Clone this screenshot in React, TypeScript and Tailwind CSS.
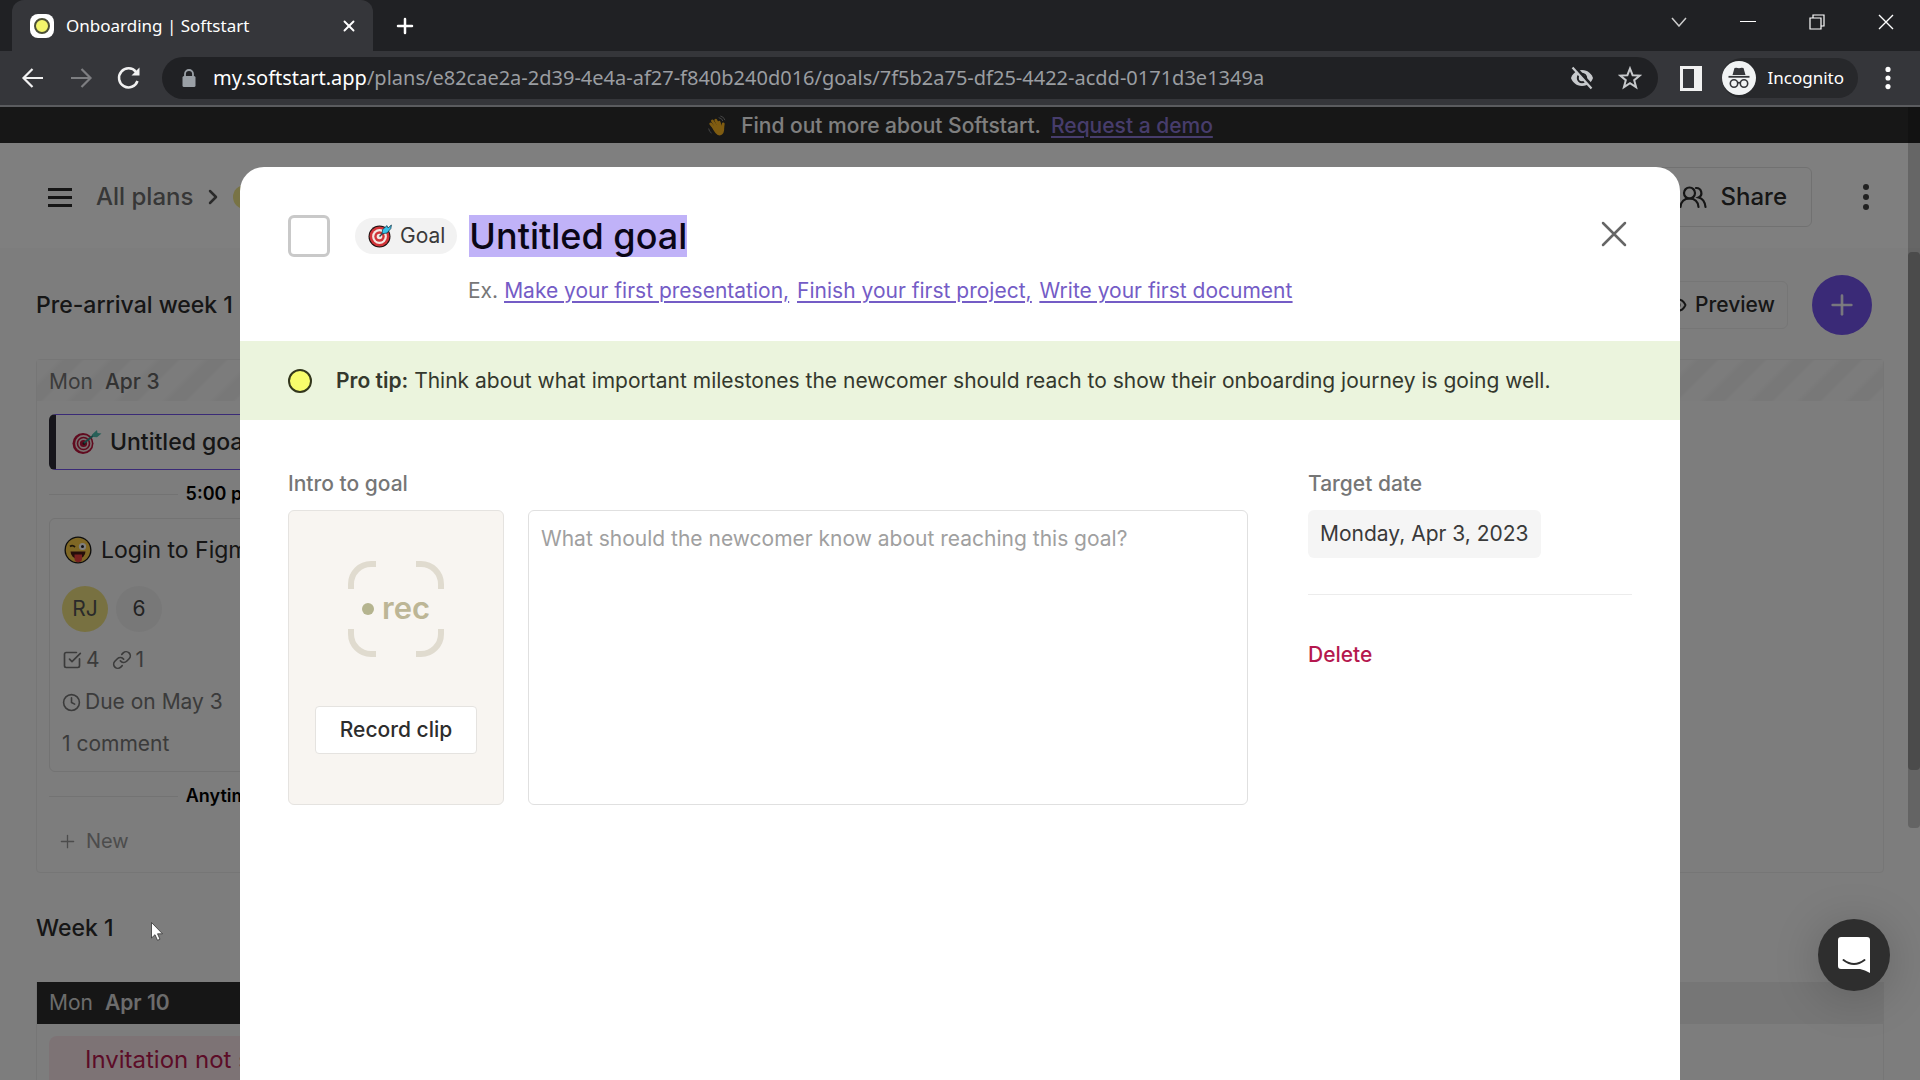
import React from "react";
import { ChevronRight, Clock, Eye, Link, Plus, SquareCheckBig, X } from "lucide-react";

const ui = "font-['Inter',sans-serif]";
const chrome = "font-['Noto_Sans','Open_Sans',sans-serif]";

function TargetEmoji({ className }: { className: string }) {
  return (
    <svg viewBox="0 0 24 24" className={className} aria-hidden="true">
      <circle cx="11.5" cy="12.5" r="11" fill="#1c1212" />
      <circle cx="11.5" cy="12.5" r="10" fill="#d13438" />
      <circle cx="11.5" cy="12.5" r="7.4" fill="#f3e9e3" />
      <circle cx="11.5" cy="12.5" r="5.2" fill="#d13438" />
      <circle cx="11.5" cy="12.5" r="2.8" fill="#f3e9e3" />
      <path d="M11.5 12.5 L18 6" stroke="#32424a" strokeWidth="1.4" />
      <path d="M14 9.8 L14.6 5.6 L19 1.6 L20 4 L23.4 1 L22.8 4.6 L19 9 Z" fill="#37c2ea" stroke="#173f52" strokeWidth="0.8" />
    </svg>
  );
}

function DartEmoji({ className }: { className: string }) {
  return (
    <svg viewBox="0 0 30 26" className={className} aria-hidden="true">
      <circle cx="11" cy="14.5" r="10.5" fill="#c0143c" />
      <circle cx="11.5" cy="14.5" r="7.6" fill="none" stroke="#f2dede" strokeWidth="1.6" />
      <circle cx="11.5" cy="14.5" r="4.4" fill="none" stroke="#f2dede" strokeWidth="1.6" />
      <circle cx="12" cy="14.5" r="1.4" fill="#2b2b2b" />
      <path d="M12 14 L22 6" stroke="#2f8f86" strokeWidth="2" />
      <path d="M20 5.5 L25 1 L25.500 4 L29.500 4.500 L25 8.200 L21.500 8 Z" fill="#4fc0b0" />
    </svg>
  );
}

function WinkEmoji({ className }: { className: string }) {
  return (
    <svg viewBox="0 0 28 28" className={className} aria-hidden="true">
      <circle cx="14" cy="14" r="13.500" fill="#1a1a1a" />
      <circle cx="14" cy="14" r="12.200" fill="#ffcf48" />
      <path d="M6 10.500 Q8.500 8.500 11 11" fill="none" stroke="#3a2a10" strokeWidth="1.800" />
      <circle cx="18.500" cy="10.500" r="3.600" fill="#fff" />
      <circle cx="18.500" cy="10.500" r="1.500" fill="#222" />
      <path d="M6.500 15.500 H21.500 A7.500 7.500 0 0 1 6.500 15.500 Z" fill="#4a1a14" />
      <path d="M10.500 18.500 H18 V22.500 A3.700 3.700 0 0 1 10.500 22.500 Z" fill="#f0433f" />
    </svg>
  );
}

function WaveEmoji({ className }: { className: string }) {
  return (
    <svg viewBox="0 0 24 26" className={className} aria-hidden="true">
      <g stroke="#ffb822" strokeWidth="3.400" strokeLinecap="round" fill="none">
        <path d="M10 17 L4.500 10.500" />
        <path d="M12 15 L6.500 7" />
        <path d="M14.500 14 L10.500 6" />
        <path d="M16.500 14.500 L14.500 8.500" />
        <path d="M18.500 18 L19.500 10.500" />
      </g>
      <path d="M5.500 13 L15 11.500 L20.500 14 Q21.500 23 15.500 24.500 Q10 24.500 5.500 13 Z" fill="#ffb822" />
      <path d="M14 3 Q18 3.500 19 7 M16 1 Q20.500 2 21.500 6 M2 16 Q2.500 20 5.500 21.500" fill="none" stroke="#8a8a8a" strokeWidth="1.200" />
    </svg>
  );
}

function People({ className }: { className: string }) {
  return (
    <svg viewBox="0 0 28 24" className={className} fill="none" stroke="currentColor" strokeWidth="2.200" strokeLinecap="round">
      <circle cx="10.500" cy="8" r="5.500" />
      <path d="M1.500 22 C2 16.500 5.500 13.500 10.500 13.500 S19 16.500 19.500 22" />
      <path d="M17 3 A5 5 0 0 1 19.500 12.500 C23.500 13.500 26 17 26.500 22" />
    </svg>
  );
}

function Incognito({ className }: { className: string }) {
  return (
    <svg viewBox="0 0 34 34" className={className} aria-hidden="true">
      <circle cx="17" cy="17" r="17" fill="#f1f3f4" />
      <path d="M12.500 7 Q14.500 6.500 17 7.200 Q19.500 6.500 21.500 7 L23.500 14 H10.500 Z" fill="#35363a" />
      <path d="M6.500 15.800 H27.500" stroke="#35363a" strokeWidth="1.800" />
      <g fill="none" stroke="#35363a" strokeWidth="1.600">
        <circle cx="12" cy="22.500" r="3.700" />
        <circle cx="22" cy="22.500" r="3.700" />
        <path d="M15.700 22 Q17 21 18.300 22" />
      </g>
    </svg>
  );
}

function Kebab({ className }: { className: string }) {
  return (
    <svg viewBox="0 0 8 28" className={className} fill="currentColor" aria-hidden="true">
      <circle cx="4" cy="4" r="3" />
      <circle cx="4" cy="14" r="3" />
      <circle cx="4" cy="24" r="3" />
    </svg>
  );
}

function BrowserChrome() {
  return (
    <header className={`shrink-0 bg-[#202124] text-white ${chrome}`}>
      <div className="flex h-[51px] items-stretch pl-3">
        <div className="flex w-[361px] items-center rounded-t-xl bg-[#35363a] pr-3 pl-[18px]">
          <span className="flex size-6 items-center justify-center rounded-lg bg-white">
            <span className="size-4 rounded-full border-2 border-[#4c5037] bg-[#f3f56b]" />
          </span>
          <span className="ml-3 flex-1 text-[17px]">Onboarding | Softstart</span>
          <button aria-label="Close tab" className="flex size-6 items-center justify-center">
            <X className="size-[18px]" strokeWidth={2.5} />
          </button>
        </div>
        <button aria-label="New tab" className="flex w-[63px] items-center justify-center">
          <Plus className="size-6" strokeWidth={2.5} />
        </button>
        <div className="ml-auto flex pb-[8px]">
          <button aria-label="Search tabs" className="flex w-[68px] items-center justify-center">
            <svg viewBox="0 0 16 10" className="h-[10px] w-4" fill="none" stroke="#ccc" strokeWidth="1.500"><path d="M1 1 L8 9 L15 1" /></svg>
          </button>
          <button aria-label="Minimize" className="flex w-[69px] items-center justify-center"><span className="h-px w-4 bg-white" /></button>
          <button aria-label="Restore" className="flex w-[69px] items-center justify-center">
            <svg viewBox="0 0 16 16" className="size-4" fill="none" stroke="#fff" strokeWidth="1.200"><path d="M1 4 H12 V15 H1 Z M4 4 V1 H15 V12 H12" /></svg>
          </button>
          <button aria-label="Close" className="flex w-[69px] items-center justify-center">
            <svg viewBox="0 0 16 16" className="size-4" fill="none" stroke="#fff" strokeWidth="1.400"><path d="M1 1 L15 15 M15 1 L1 15" /></svg>
          </button>
        </div>
      </div>
      <div className="flex h-[56px] items-center border-b-2 border-[#5b5c5f] bg-[#35363a] pr-7 pl-[21px]">
        <button aria-label="Back" className="mr-6 size-6">
          <svg viewBox="0 0 24 24" className="size-6" fill="none" stroke="#f1f1f1" strokeWidth="2.200"><path d="M22 12 H3 M11.500 3 L2.500 12 L11.500 21" /></svg>
        </button>
        <button aria-label="Forward" className="mr-6 size-6">
          <svg viewBox="0 0 24 24" className="size-6" fill="none" stroke="#7d7e81" strokeWidth="2.200"><path d="M2 12 H21 M12.500 3 L21.500 12 L12.500 21" /></svg>
        </button>
        <button aria-label="Reload" className="mr-[21px] size-6">
          <svg viewBox="0 0 24 24" className="size-6" fill="none" stroke="#f1f1f1" strokeWidth="2.500"><path d="M20.500 15 A9.500 9.500 0 1 1 19 6" /><path d="M22.500 1.500 V9.500 H14.500 Z" fill="#f1f1f1" stroke="none" /></svg>
        </button>
        <div className="flex h-[42px] min-w-0 flex-1 items-center rounded-full bg-[#202124] pr-[16px] pl-5">
          <svg viewBox="0 0 14 18" className="mr-[17px] h-[18px] w-[14px] shrink-0"><path d="M3 8 V5 A4 4 0 0 1 11 5 V8" fill="none" stroke="#9aa0a6" strokeWidth="1.800" /><rect x="0.500" y="7" width="13" height="11" rx="1.500" fill="#9aa0a6" /></svg>
          <span className="flex-1 truncate text-[20px] text-[#9a9da1]"><span className="text-white">my.softstart.app</span>/plans/e82cae2a-2d39-4e4a-af27-f840b240d016/goals/7f5b2a75-df25-4422-acdd-0171d3e1349a</span>
          <button aria-label="Third-party cookies blocked" className="mr-6 size-6">
            <svg viewBox="0 0 24 24" className="size-6"><path d="M12 4 C6 4 2 8.500 1 12 C2 15.500 6 20 12 20 S22 15.500 23 12 C22 8.500 18 4 12 4 Z" fill="#c7c9cc" /><circle cx="12" cy="12" r="4.200" fill="none" stroke="#202124" strokeWidth="2" /><path d="M4 0 L23 21" stroke="#202124" strokeWidth="3" /><path d="M2.500 1.500 L21.500 22.500" stroke="#c7c9cc" strokeWidth="2.200" /></svg>
          </button>
          <button aria-label="Bookmark" className="size-6">
            <svg viewBox="0 0 24 24" className="size-6" fill="none" stroke="#c7c9cc" strokeWidth="2"><path d="M12 2.500 L14.600 9.200 L21.800 9.600 L16.200 14.200 L18.100 21.200 L12 17.200 L5.900 21.200 L7.800 14.200 L2.200 9.600 L9.400 9.200 Z" /></svg>
          </button>
        </div>
        <button aria-label="Side panel" className="ml-[22px] flex h-[25px] w-[22px] border-[3px] border-r-[8px] border-[#f1f1f1]" />
        <button className="ml-[20px] flex h-[40px] items-center rounded-full bg-[#27282b] pr-[14px] text-[17px]">
          <Incognito className="mr-3 size-[34px]" />
          Incognito
        </button>
        <button aria-label="Menu" className="ml-[26px]"><Kebab className="h-6 w-[8px]" /></button>
      </div>
    </header>
  );
}

function Divider({ label }: { label: string }) {
  return (
    <div className="flex items-center gap-[8px]">
      <span className="h-px flex-1 bg-[#e6e6e6]" />
      <span className="text-[18px] leading-6 font-semibold text-black">{label}</span>
      <span className="h-px flex-1 bg-[#e6e6e6]" />
    </div>
  );
}

function PlanPage() {
  return (
    <div className="h-full overflow-hidden bg-[#fafafa] text-[#2d2d2d]">
      <div className="flex h-9 items-center justify-center gap-[10px] bg-[#2e2e2e] pt-px text-[21px] font-medium text-white">
        <WaveEmoji className="mr-1 h-[22px] w-5" />
        Find out more about Softstart.
        <a href="#demo" className="text-[#8f7ad8] underline decoration-2 underline-offset-3">Request a demo</a>
      </div>
      <div className="flex h-[105px] items-center bg-white pt-[3px] pr-11 pl-12">
        <button aria-label="Open menu" className="flex w-6 flex-col gap-[5px]">
          <span className="h-[3px] bg-[#2d2d2d]" />
          <span className="h-[3px] bg-[#2d2d2d]" />
          <span className="h-[3px] bg-[#2d2d2d]" />
        </button>
        <a href="#plans" className="ml-6 text-[24px] font-medium text-[#6e6e6e]">All plans</a>
        <ChevronRight className="mx-2 size-6 text-[#555]" strokeWidth={2.5} />
        <span className="h-6 w-40 rounded-full bg-[#f0e68a]" />
        <button className="mr-[44px] ml-auto flex h-[60px] items-center gap-[14px] rounded-md border border-[#e3e3e3] pr-6 pl-6 text-[24px] font-medium">
          <People className="h-6 w-7" />
          Share
        </button>
        <button aria-label="Plan options" className="px-[6px] text-[#444]"><Kebab className="h-7 w-[8px]" /></button>
      </div>
      <div className="flex h-[111px] items-center pt-[3px] pr-12 pl-9">
        <h2 className="text-[23px] font-medium">Pre-arrival week 1</h2>
        <button className="ml-auto flex h-12 items-center gap-2 rounded-md border border-[#ececec] px-3 text-[21px] font-medium">
          <Eye className="size-5" strokeWidth={2.5} />
          Preview
        </button>
        <button aria-label="Add" className="ml-6 flex size-[60px] items-center justify-center rounded-full bg-[#7454ee] text-white/90">
          <Plus className="size-8" strokeWidth={2} />
        </button>
      </div>
      <div className="mx-9 rounded-sm border border-[#ececec] pb-[18px]">
        <div className="flex h-[41px] items-center gap-3 bg-[repeating-linear-gradient(135deg,#f9f9f9_0,#f9f9f9_14px,#f0f0f0_20px,#f0f0f0_31px,#f9f9f9_34px)] px-3 pt-[2px] text-[21px] text-[#777]">
          Mon <span className="font-medium text-[#666]">Apr 3</span>
        </div>
        <div className="flex w-[370px] flex-col px-3 pt-[13px]">
          <div className="flex h-14 items-center gap-2 rounded-md border border-l-[7px] border-[#7454ee] border-l-[#2d2b36] bg-white pl-[16px] text-[23px] font-medium">
            <DartEmoji className="h-[26px] w-[30px]" />
            Untitled goal
          </div>
          <div className="py-3"><Divider label="5:00 pm" /></div>
          <div className="flex h-[254px] flex-col rounded-md border border-[#e6e6e6] px-3 pt-[11px] text-[21px] text-[#777]">
            <div className="flex h-10 items-center gap-[9px] pl-[2px] text-[23px] text-[#2d2d2d]">
              <WinkEmoji className="size-7" />
              Login to Figma
            </div>
            <div className="mt-4 flex gap-2">
              <span className="flex size-[46px] items-center justify-center rounded-full bg-[#f0e282] text-[#555]">RJ</span>
              <span className="flex size-[46px] items-center justify-center rounded-full bg-[#f0f0f0] text-[#444]">6</span>
            </div>
            <div className="mt-3 flex h-8 items-center">
              <SquareCheckBig className="mr-1 size-5" />4
              <Link className="mr-1 ml-3 size-5" />1
            </div>
            <div className="mt-[10px] flex h-8 items-center gap-1"><Clock className="size-[19px]" />Due on May 3</div>
            <div className="mt-[10px] flex h-8 items-center">1 comment</div>
          </div>
          <div className="pt-3"><Divider label="Anytime" /></div>
          <button className="mt-5 flex h-[26px] items-center gap-2 pl-2 text-[20px] text-[#999]"><Plus className="size-[21px]" strokeWidth={1.5} />New</button>
        </div>
      </div>
      <h2 className="flex h-[109px] items-center px-9 pt-[2px] text-[23px] font-medium">Week 1</h2>
      <div className="mx-9 border border-t-0 border-[#ececec]">
        <div className="flex h-[42px] bg-[#ececec] text-[21px] text-[#d8d8d8]">
          <div className="flex w-[370px] items-center gap-3 bg-[#2c2c2c] px-3">Mon <span className="font-semibold">Apr 10</span></div>
        </div>
        <div className="w-[370px] px-3 pt-3">
          <div className="flex h-16 items-start rounded-lg bg-[#fbe6eb] pt-[6px] pl-9 text-[24px] text-[#b8194f]">Invitation not sent</div>
        </div>
      </div>
    </div>
  );
}

function GoalDialog() {
  return (
    <div role="dialog" aria-label="Goal" className="flex w-3/4 flex-col rounded-t-3xl bg-white text-[21px] text-[#3a3a3a]">
      <div className="h-[174px] px-12 pt-12">
        <div className="flex h-[42px] items-center">
          <input type="checkbox" aria-label="Goal completed" className="size-[42px] appearance-none rounded-md border-[3px] border-[#c9c9c9]" />
          <span className="ml-[25px] flex h-9 items-center gap-2 rounded-full bg-[#f2f2f2] pr-3 pl-[13px]">
            <TargetEmoji className="size-6" />
            Goal
          </span>
          <input aria-label="Goal title" defaultValue="Untitled goal" className="ml-3 field-sizing-content h-[42px] bg-[#c0b2f8] text-[36px] font-medium text-[#0a0616] outline-none" />
          <button aria-label="Close" className="mr-[5px] mb-[5px] ml-auto text-[#666]"><svg viewBox="0 0 26 26" className="size-[26px]" fill="none" stroke="currentColor" strokeWidth="2.500" strokeLinecap="round"><path d="M2 2 L24 24 M24 2 L2 24" /></svg></button>
        </div>
        <div className="mt-5 flex pl-[180px] leading-7 text-[#777]">
          Ex.
          <span className="flex gap-2 pl-[6px] text-[#745cc6] underline decoration-2 underline-offset-3">
            <a href="#presentation">Make your first presentation,</a>
            <a href="#project">Finish your first project,</a>
            <a href="#document">Write your first document</a>
          </span>
        </div>
      </div>
      <div className="flex h-[79px] items-center bg-[#ebf4dd] px-12 text-[#34382d]">
        <span className="mr-6 size-6 rounded-full border-2 border-[#33371c] bg-[#f8fc6c]" />
        <p className="pt-px"><strong className="font-semibold">Pro tip:</strong> Think about what important milestones the newcomer should reach to show their onboarding journey is going well.</p>
      </div>
      <div className="flex gap-[60px] px-12 pt-[50px]">
        <div className="flex-1">
          <label htmlFor="intro" className="block leading-7 font-medium text-[#767676]">Intro to goal</label>
          <div className="mt-3 flex h-[295px] gap-6">
            <div className="flex w-[216px] flex-col items-center rounded-md border border-[#e5e3e0] bg-[#f8f5f1] pt-[50px]">
              <svg viewBox="0 0 96 96" className="size-24" role="img" aria-label="rec">
                <path d="M3 28 V23 A20 20 0 0 1 23 3 H28 M68 3 H73 A20 20 0 0 1 93 23 V28 M93 68 V73 A20 20 0 0 1 73 93 H68 M28 93 H23 A20 20 0 0 1 3 73 V68" fill="none" stroke="#e0dbcf" strokeWidth="6" />
                <circle cx="20" cy="48" r="6" fill="#b5b48f" />
                <text x="34" y="58" className="fill-[#bdb696] text-[31px] font-semibold">rec</text>
              </svg>
              <button className="mt-[49px] h-12 rounded-sm border border-[#e5e3e0] bg-white px-6 font-medium text-[#2d2d2d]">Record clip</button>
            </div>
            <textarea id="intro" placeholder="What should the newcomer know about reaching this goal?" className="min-w-0 flex-1 resize-none rounded-md border border-[#e0e0e0] bg-white px-3 py-[14px] leading-7 placeholder:text-[#a0a0a0]" />
          </div>
        </div>
        <div className="w-[324px]">
          <p className="leading-7 font-medium text-[#767676]">Target date</p>
          <button className="mt-3 h-12 rounded-md bg-[#f5f5f5] px-3">Monday, Apr 3, 2023</button>
          <hr className="mt-9 border-[#ececec]" />
          <button className="mt-[46px] leading-7 font-medium text-[#b5184e]">Delete</button>
        </div>
      </div>
    </div>
  );
}

export default function App() {
  return (
    <div className={`flex h-screen flex-col overflow-hidden ${ui}`}>
      <BrowserChrome />
      <main className="relative min-h-0 flex-1">
        <PlanPage />
        <div className="absolute top-0 right-0 h-[721px] w-3 rounded-b bg-black/20 pt-[145px]">
          <div className="h-[518px] rounded bg-[#969696]" />
        </div>
        <div className="absolute inset-0 flex justify-center bg-black/50 pt-[60px]">
          <GoalDialog />
        </div>
        <button aria-label="Open chat" className="absolute right-[30px] bottom-[89px] flex size-[72px] items-center justify-center rounded-full bg-[#2e2e2e] shadow-[0_6px_48px_rgba(0,0,0,0.2)]">
          <svg viewBox="0 0 32 36" className="h-9 w-8"><path d="M3 0 H29 Q32 0 32 3 V36 Q27 33 22 32 H3 Q0 32 0 29 V3 Q0 0 3 0 Z" fill="#fff" /><path d="M5.500 23 Q16 31 26.500 23" fill="none" stroke="#2e2e2e" strokeWidth="2" strokeLinecap="round" /></svg>
        </button>
        <svg viewBox="0 0 12 19" className="absolute top-[815px] left-[151px] h-[19px] w-3" aria-hidden="true"><path d="M0.500 0.500 V16 L4 12.700 L6.500 18.300 L9 17.200 L6.500 11.800 H11.500 Z" fill="#fff" stroke="#333" strokeWidth="0.800" /></svg>
      </main>
    </div>
  );
}
